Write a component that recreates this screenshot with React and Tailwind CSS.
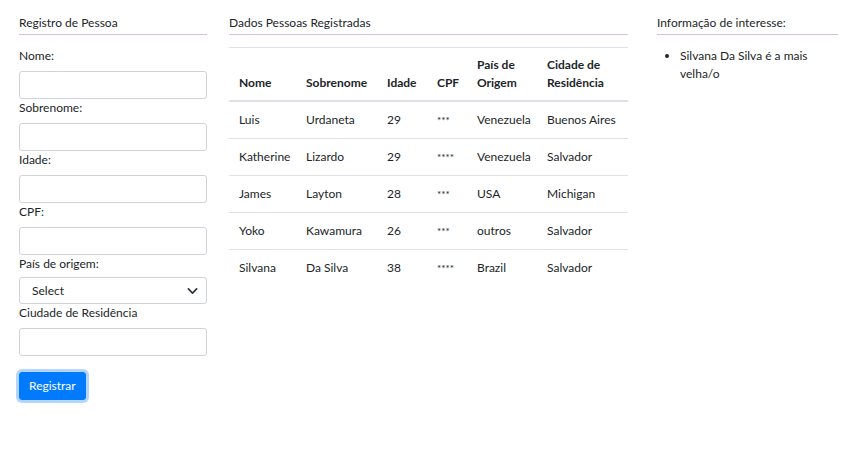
import React from 'react';

const pessoas = [
  { nome: 'Luis', sobrenome: 'Urdaneta', idade: 29, cpf: '***', pais: 'Venezuela', cidade: 'Buenos Aires' },
  { nome: 'Katherine', sobrenome: 'Lizardo', idade: 29, cpf: '****', pais: 'Venezuela', cidade: 'Salvador' },
  { nome: 'James', sobrenome: 'Layton', idade: 28, cpf: '***', pais: 'USA', cidade: 'Michigan' },
  { nome: 'Yoko', sobrenome: 'Kawamura', idade: 26, cpf: '***', pais: 'outros', cidade: 'Salvador' },
  { nome: 'Silvana', sobrenome: 'Da Silva', idade: 38, cpf: '****', pais: 'Brazil', cidade: 'Salvador' },
];

const inputClass =
  'block w-full h-[28px] px-[9px] border border-[#ced4da] rounded-[3px] bg-white text-[12px] outline-none';

const Field = ({ label }) => (
  <div>
    <label className="block leading-[18px] mb-[6px]">{label}</label>
    <input type="text" className={inputClass} />
  </div>
);

const SectionTitle = ({ children }) => (
  <h5 className="leading-[18px] pb-[2px] border-b border-[#dcbfe0] text-[12px] font-normal text-[#212529]">
    {children}
  </h5>
);

const App = () => {
  return (
    <div
      className="w-[844px] h-[455px] bg-white text-[12px] text-[#212529] flex pl-[19px] pt-[14px]"
      style={{ fontFamily: '"Segoe UI", Lato, "Open Sans", sans-serif' }}
    >
      {/* formulário */}
      <div className="w-[188px] shrink-0">
        <SectionTitle>Registro de Pessoa</SectionTitle>
        <form className="mt-[12px]">
          <Field label="Nome:" />
          <Field label="Sobrenome:" />
          <Field label="Idade:" />
          <Field label="CPF:" />
          <div>
            <label className="block leading-[18px] mb-[4px]">País de origem:</label>
            <div className="relative">
              <select className={inputClass + ' appearance-none pl-[12px] !h-[27px]'} defaultValue="">
                <option value="">Select</option>
              </select>
              <svg
                className="absolute right-[9px] top-1/2 -translate-y-1/2 w-[11px] h-[11px] pointer-events-none"
                viewBox="0 0 16 16"
              >
                <path d="M2 5l6 6 6-6" fill="none" stroke="#343a40" strokeWidth="2.6" strokeLinecap="round" strokeLinejoin="round" />
              </svg>
            </div>
          </div>
          <Field label="Ciudade de Residência" />
          <button
            type="button"
            className="mt-[16px] h-[28px] px-[9px] rounded-[3px] bg-[#007bff] border border-[#007bff] text-white text-[12px] leading-[18px] shadow-[0_0_0_3px_rgba(130,185,255,0.6)]"
          >
            Registrar
          </button>
        </form>
      </div>

      {/* tabela */}
      <div className="w-[399px] shrink-0 ml-[22px]">
        <SectionTitle>Dados Pessoas Registradas</SectionTitle>
        <table className="mt-[12px] w-full border-collapse table-fixed">
          <colgroup>
            <col className="w-[67px]" />
            <col className="w-[81px]" />
            <col className="w-[50px]" />
            <col className="w-[40px]" />
            <col className="w-[70px]" />
            <col className="w-[91px]" />
          </colgroup>
          <thead>
            <tr className="border-t border-[#dee2e6]">
              {['Nome', 'Sobrenome', 'Idade', 'CPF', 'País de Origem', 'Cidade de Residência'].map((h) => (
                <th
                  key={h}
                  className="text-left align-bottom font-bold pl-[10px] pr-[6px] py-[8px] leading-[18px] border-b-2 border-[#dee2e6]"
                >
                  {h}
                </th>
              ))}
            </tr>
          </thead>
          <tbody>
            {pessoas.map((p) => (
              <tr key={p.nome} className="border-t border-[#dee2e6] first:border-t-0">
                <td className="pl-[10px] py-[9px] leading-[18px] whitespace-nowrap">{p.nome}</td>
                <td className="pl-[10px] py-[9px] leading-[18px] whitespace-nowrap">{p.sobrenome}</td>
                <td className="pl-[10px] py-[9px] leading-[18px]">{p.idade}</td>
                <td className="pl-[10px] py-[9px] leading-[18px] text-[10px]">{p.cpf}</td>
                <td className="pl-[10px] py-[9px] leading-[18px]">{p.pais}</td>
                <td className="pl-[10px] py-[9px] leading-[18px] whitespace-nowrap">{p.cidade}</td>
              </tr>
            ))}
          </tbody>
        </table>
      </div>

      {/* info */}
      <div className="w-[181px] shrink-0 ml-[29px]">
        <SectionTitle>Informação de interesse:</SectionTitle>
        <ul className="mt-[12px] pl-[23px] list-disc leading-[18px]">
          <li>
            Silvana Da Silva é a mais
            <br />
            velha/o
          </li>
        </ul>
      </div>
    </div>
  );
};

export default App;
